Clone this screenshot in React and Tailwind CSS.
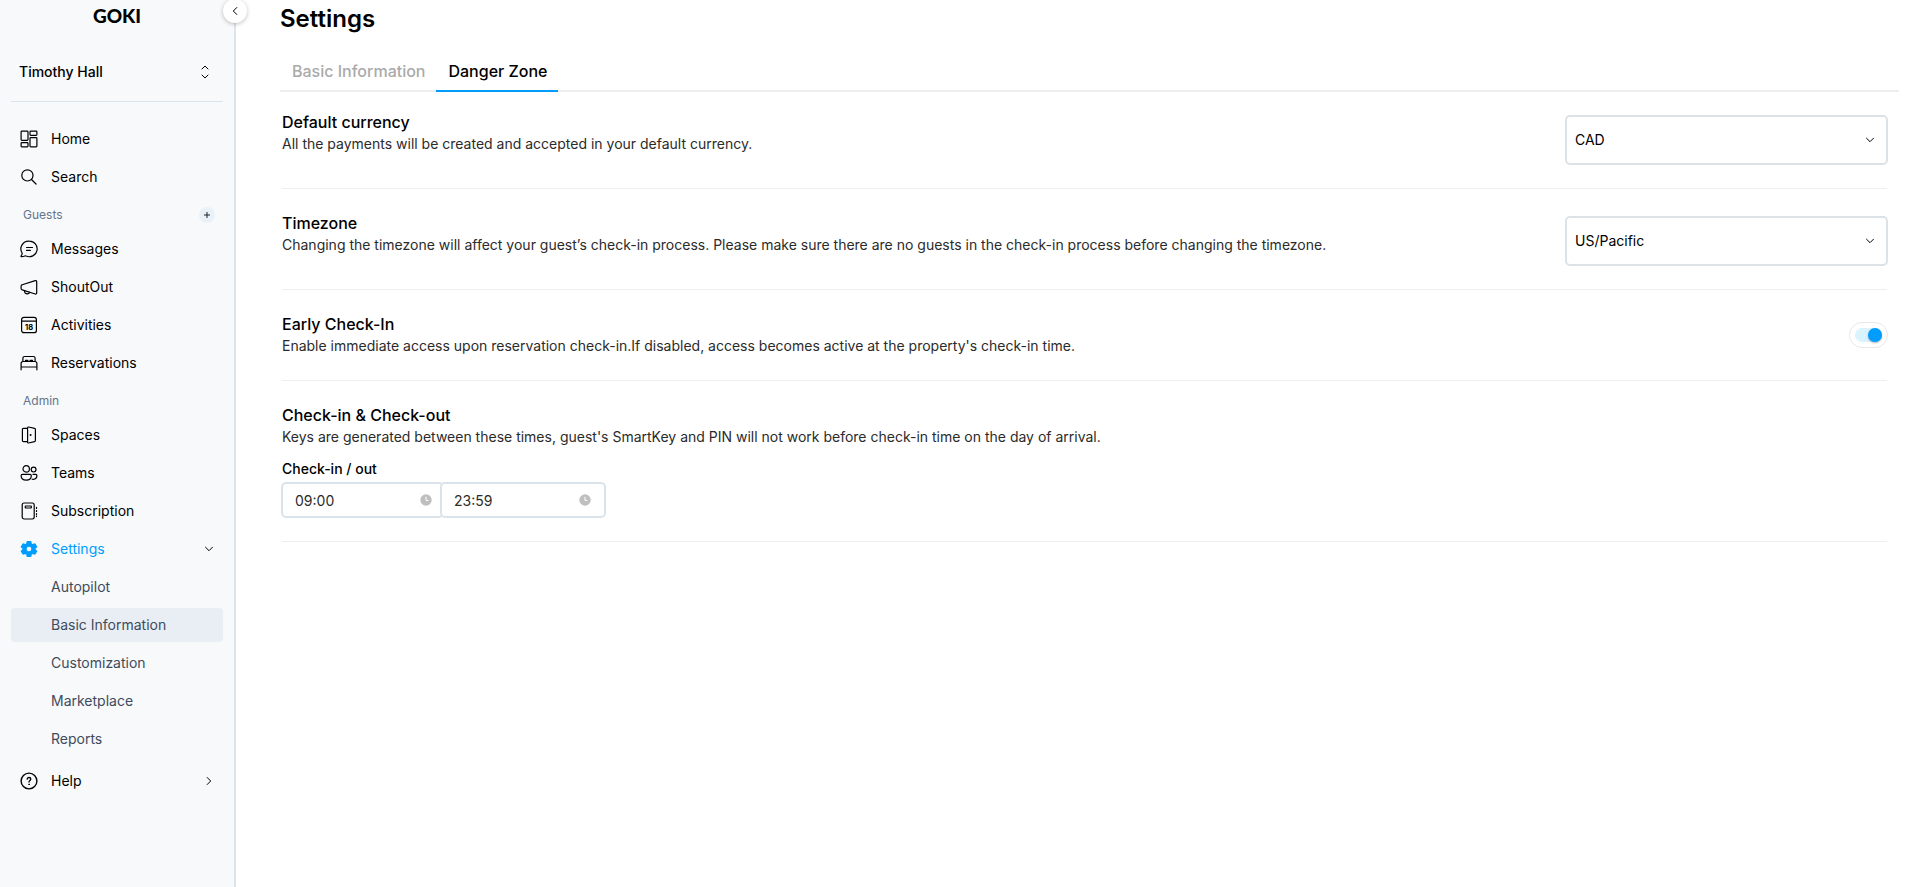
import { useState } from 'react';

function Icon({ children, className = 'size-[18px]' }) {
  return (
    <svg
      viewBox="0 0 18 18"
      className={className}
      fill="none"
      stroke="currentColor"
      strokeWidth="1.2"
      strokeLinecap="round"
      strokeLinejoin="round"
      aria-hidden="true"
    >
      {children}
    </svg>
  );
}

const icons = {
  home: (
    <Icon>
      <rect x="1.1" y="1.1" width="6.9" height="9.2" rx="0.8" />
      <rect x="1.1" y="12.7" width="6.9" height="4.2" rx="0.8" />
      <rect x="10" y="1.1" width="6.9" height="4.2" rx="0.8" />
      <rect x="10" y="7.700" width="6.900" height="9.200" rx="0.8" />
    </Icon>
  ),
  search: (
    <Icon>
      <circle cx="7.4" cy="7.4" r="5.6" />
      <path d="M11.5 11.5 16 16" />
    </Icon>
  ),
  messages: (
    <Icon>
      <path d="M9.3 1.1a7.8 7.8 0 1 1-3.2 14.9c-.5-.25-.8-.2-1.3 0-1.1.5-2.2.8-3.5.7-.4 0-.5-.5-.2-.8.8-1 1.2-1.9 1-2.9A7.8 7.8 0 0 1 9.3 1.1Z" />
      <path d="M6.500 7.500h6M6.500 10.400h3.800" />
    </Icon>
  ),
  shout: (
    <Icon>
      <path d="M2.300 6.700 15.200 2.600c.8-.2 1.500.3 1.500 1v11.400c0 .7-.7 1.200-1.500 1L2.300 11.900C1.500 11.600 1.100 11 1.100 10.400V8.200c0-.7.400-1.300 1.200-1.500Z" />
      <path d="M4.400 12.700c.1 1.900 1.400 3.100 3 3.100 1 0 1.900-.6 2.300-1.500" />
    </Icon>
  ),
  activities: (
    <Icon>
      <rect x="1.600" y="1.300" width="14.800" height="15.400" rx="2.300" />
      <path d="M1.600 5.200h14.800" />
      <text
        x="9"
        y="13.700"
        textAnchor="middle"
        fontSize="7.500"
        fontWeight="700"
        fontFamily="Inter, sans-serif"
        fill="currentColor"
        stroke="none"
      >
        18
      </text>
    </Icon>
  ),
  bed: (
    <Icon>
      <path d="M1.100 15.800V9.400c0-1.100.9-1.900 2-1.900h11.800c1.100 0 2 .8 2 1.900v6.400M1.100 13h15.800" />
      <path d="M2.900 7.300V4.200c0-1 .8-1.700 1.700-1.700h8.800c1 0 1.700.7 1.700 1.700v3.100" />
      <path d="M5.500 7.300V6.300h2.400v1M10.100 7.300V6.300h2.400v1" />
    </Icon>
  ),
  door: (
    <Icon>
      <path d="M7.300 2.400H3.500c-.7 0-1.100.4-1.100 1.100v11c0 .7.4 1.100 1.100 1.100h3.800" />
      <path d="m8.600 1 6 1.400c.5.100.8.500.8 1v11.200c0 .5-.3.900-.8 1l-6 1.400c-.6.100-1-.2-1-.8V1.800c0-.6.400-.9 1-.8Z" />
      <circle cx="10.600" cy="9" r="0.400" fill="currentColor" />
    </Icon>
  ),
  teams: (
    <Icon>
      <circle cx="6.200" cy="4.900" r="3.200" />
      <circle cx="13.600" cy="5.600" r="2.400" />
      <path d="M2.500 10.400h7.400c.8 0 1.400.6 1.400 1.300 0 2.800-1.900 4.400-5.100 4.400s-5.100-1.600-5.100-4.400c0-.7.6-1.300 1.400-1.300Z" />
      <path d="M13 10.400h2.700c.7 0 1.200.5 1.200 1.200 0 2.300-1.200 3.700-3.600 3.700-.4 0-.8 0-1.100-.1" />
    </Icon>
  ),
  subscription: (
    <Icon>
      <rect x="2.200" y="1" width="12" height="16" rx="1.900" />
      <rect x="5.300" y="4" width="6" height="2" rx="0.200" />
      <path d="M16.500 5.400v1M16.500 8.500v1M16.500 11.600v1M16.500 14v.6" />
    </Icon>
  ),
  settings: (
    <svg viewBox="0 0 18 18" className="size-[18px]" fill="currentColor" aria-hidden="true">
      <path
        fillRule="evenodd"
        stroke="currentColor"
        strokeWidth="1.200"
        strokeLinejoin="round"
        d="M7.300 1.500h3.400l.6 2.400 1.300.75 2.400-.7 1.700 2.900-1.800 1.700v.9l1.800 1.700-1.700 2.900-2.400-.7-1.300.75-.6 2.400H7.300l-.6-2.400-1.300-.75-2.400.7-1.700-2.900 1.800-1.700v-.9L1.300 6.850l1.700-2.900 2.400.7 1.300-.75ZM9 6.100a2.900 2.900 0 1 0 0 5.800 2.900 2.900 0 0 0 0-5.800Z"
      />
    </svg>
  ),
  help: (
    <Icon>
      <circle cx="9" cy="9" r="7.900" strokeWidth="1.400" />
      <path d="M7.200 7.200c0-1 .8-1.700 1.800-1.700s1.800.7 1.800 1.600c0 1.300-1.800 1.400-1.800 2.900" strokeWidth="1.300" />
      <circle cx="9" cy="12.300" r="0.400" fill="currentColor" strokeWidth="0.800" />
    </Icon>
  ),
};

function Chevron({ className }) {
  return (
    <svg
      viewBox="0 0 10 10"
      className={className}
      fill="none"
      stroke="currentColor"
      strokeLinecap="round"
      strokeLinejoin="round"
      aria-hidden="true"
    >
      <path d="m1.500 3.200 3.500 3.500 3.500-3.500" />
    </svg>
  );
}

function NavItem({ icon, label, active, trailing }) {
  return (
    <a
      href="#"
      className={
        'flex h-[34px] items-center gap-[13px] rounded pr-[9px] pl-[9px] ' +
        (active ? 'text-[#009dff]' : 'text-black')
      }
    >
      {icons[icon]}
      <span className="flex-1">{label}</span>
      {trailing}
    </a>
  );
}

function SubItem({ label, active }) {
  return (
    <a
      href="#"
      aria-current={active ? 'page' : undefined}
      className={
        'flex h-[34px] items-center rounded pl-10 text-[#3f4b5c] ' + (active ? 'bg-[#e8eef4]' : '')
      }
    >
      {label}
    </a>
  );
}

function Sidebar() {
  return (
    <aside className="relative min-h-screen w-[236px] shrink-0 border-r-2 border-[#dae4ed] bg-[#f7f9fb] px-[11px] text-sm">
      <button
        type="button"
        aria-label="Collapse sidebar"
        className="absolute -top-[1px] -right-[13px] flex size-6 items-center justify-center rounded-full bg-white shadow-[0_1px_4px_rgba(0,0,0,0.25)]"
      >
        <Chevron className="size-2.5 rotate-90" />
      </button>
      <div className="flex h-[30px] items-center justify-center font-[Lato,sans-serif] text-[19px] leading-none font-black text-black">
        GOKI
      </div>
      <button
        type="button"
        className="mt-[22px] flex h-10 w-full items-center justify-between pr-[11px] pl-2 font-medium text-black"
      >
        Timothy Hall
        <svg
          viewBox="0 0 14 14"
          className="size-3.5"
          fill="none"
          stroke="currentColor"
          strokeLinecap="round"
          strokeLinejoin="round"
          aria-hidden="true"
        >
          <path d="m4 4 3-3 3 3M4 10l3 3 3-3" />
        </svg>
      </button>
      <div className="mt-[9px] h-px bg-[#dae4ed]" />
      <nav className="mt-5 flex flex-col gap-1">
        <NavItem icon="home" label="Home" />
        <NavItem icon="search" label="Search" />
        <div>
          <div className="flex h-[34px] items-center justify-between pr-2 pl-3 text-xs text-[#64748b]">
            Guests
            <button
              type="button"
              aria-label="Add guest"
              className="flex size-4 items-center justify-center rounded-full bg-[#e9f2f8] text-[#222222]"
            >
              <svg viewBox="0 0 8 8" className="size-2" fill="none" stroke="currentColor" aria-hidden="true">
                <path d="M4 1v6M1 4h6" />
              </svg>
            </button>
          </div>
          <NavItem icon="messages" label="Messages" />
        </div>
        <NavItem icon="shout" label="ShoutOut" />
        <NavItem icon="activities" label="Activities" />
        <NavItem icon="bed" label="Reservations" />
        <div>
          <div className="flex h-[34px] items-center pl-3 text-xs text-[#64748b]">Admin</div>
          <NavItem icon="door" label="Spaces" />
        </div>
        <NavItem icon="teams" label="Teams" />
        <NavItem icon="subscription" label="Subscription" />
        <NavItem
          icon="settings"
          label="Settings"
          active
          trailing={<Chevron className="size-2.5 text-black" />}
        />
        <SubItem label="Autopilot" />
        <SubItem label="Basic Information" active />
        <SubItem label="Customization" />
        <SubItem label="Marketplace" />
        <SubItem label="Reports" />
        <div className="pt-1">
          <NavItem icon="help" label="Help" trailing={<Chevron className="size-2.5 -rotate-90 text-black" />} />
        </div>
      </nav>
    </aside>
  );
}

function Section({ title, description, control, first, children }) {
  return (
    <section
      className={
        'flex items-start justify-between gap-6 border-b border-[#eeeeee] pb-[23px] ' +
        (first ? 'pt-[18px]' : 'pt-[22px]')
      }
    >
      <div>
        <h2 className="text-base leading-6 font-medium text-black">{title}</h2>
        <p className="pb-px text-sm leading-5 text-[#2b2b2b]">{description}</p>
        {children}
      </div>
      {control}
    </section>
  );
}

function SelectBox({ label, options }) {
  return (
    <div className="relative mt-[5px] -mr-px w-[323px] shrink-0">
      <select
        aria-label={label}
        className="h-[50px] w-full appearance-none rounded-[5px] border-2 border-[#dbe2e8] bg-white px-2 text-sm text-black"
      >
        {options.map((option) => (
          <option key={option}>{option}</option>
        ))}
      </select>
      <Chevron className="pointer-events-none absolute top-5 right-[13px] size-2.5" />
    </div>
  );
}

function Toggle({ label }) {
  const [on, setOn] = useState(true);
  return (
    <label className="mt-[10px] -mr-px flex h-[26px] w-[39px] shrink-0 cursor-pointer items-center justify-center rounded-full border border-[#e8e8e8]">
      <input
        type="checkbox"
        aria-label={label}
        checked={on}
        onChange={() => setOn(!on)}
        className="peer sr-only"
      />
      <span className="flex h-3.5 w-[27px] rounded-full bg-[#e5e7eb] peer-checked:justify-end peer-checked:bg-[#d9f3ff] peer-checked:[&>span]:bg-[#009dff]">
        <span className="size-3.5 rounded-full bg-[#9ca3af] shadow-[0_1px_2px_rgba(0,0,0,0.3)]" />
      </span>
    </label>
  );
}

function TimeField({ label, value, className, iconClassName }) {
  return (
    <div className={'relative ' + className}>
      <input
        aria-label={label}
        defaultValue={value}
        className="h-9 w-full rounded-[5px] border-2 border-[#dbe3ea] bg-white pl-3 text-sm text-[#2b2b2b]"
      />
      <svg
        viewBox="0 0 12 12"
        className={'pointer-events-none absolute top-3 size-3 ' + iconClassName}
        aria-hidden="true"
      >
        <circle cx="6" cy="6" r="5.700" fill="#bfbfbf" />
        <path d="M6 2.800v3.600h2.500" fill="none" stroke="#ffffff" />
      </svg>
    </div>
  );
}

export default function App() {
  return (
    <div className="flex min-h-screen bg-white font-[Inter,sans-serif] text-black">
      <Sidebar />
      <main className="min-w-0 flex-1 pr-5 pl-11">
        <h1 className="pt-[3px] text-2xl leading-8 font-semibold">Settings</h1>
        <div role="tablist" className="mt-[17px] flex h-10 border-b-2 border-[#eeeeee] font-medium">
          <button type="button" role="tab" aria-selected="false" className="h-10 pr-[11px] pb-0.5 pl-3 text-[#aaaaaa]">
            Basic Information
          </button>
          <button
            type="button"
            role="tab"
            aria-selected="true"
            className="h-10 border-b-2 border-[#009dff] pr-[11px] pl-3"
          >
            Danger Zone
          </button>
        </div>
        <div className="mr-3 ml-0.5">
          <Section
            first
            title="Default currency"
            description="All the payments will be created and accepted in your default currency."
            control={<SelectBox label="Default currency" options={['CAD', 'USD', 'EUR']} />}
          />
          <Section
            title="Timezone"
            description="Changing the timezone will affect your guest’s check-in process. Please make sure there are no guests in the check-in process before changing the timezone."
            control={<SelectBox label="Timezone" options={['US/Pacific', 'US/Eastern']} />}
          />
          <Section
            title="Early Check-In"
            description="Enable immediate access upon reservation check-in.If disabled, access becomes active at the property's check-in time."
            control={<Toggle label="Early Check-In" />}
          />
          <Section
            title="Check-in & Check-out"
            description="Keys are generated between these times, guest's SmartKey and PIN will not work before check-in time on the day of arrival."
          >
            <fieldset>
              <legend className="pt-[11px] pb-[3px] text-sm leading-5 font-medium text-black">
                Check-in / out
              </legend>
              <div className="-ml-px flex">
                <TimeField label="Check-in time" value="09:00" className="w-[163px]" iconClassName="right-3" />
                <TimeField
                  label="Check-out time"
                  value="23:59"
                  className="-ml-1 w-[166px]"
                  iconClassName="right-[15px]"
                />
              </div>
            </fieldset>
          </Section>
        </div>
      </main>
    </div>
  );
}
